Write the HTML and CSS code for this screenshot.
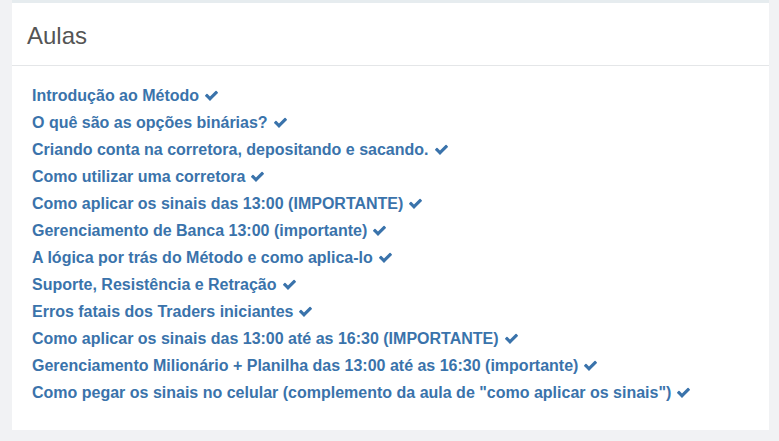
FILE: index.html
```html
<!DOCTYPE html>
<html lang="pt">
<head>
  <meta charset="UTF-8" />
  <title>Aulas</title>
  <link rel="stylesheet" href="styles.css">
</head>
<body>
  <div class="panel">
    <div class="panel-heading">
      <h3>Aulas</h3>
    </div>
    <ul class="lessons">
      <li><a href="#">Introdução ao Método</a><svg class="check" viewBox="0 0 1792 1792"><path d="M1671 566q0 40-28 68l-724 724-136 136q-28 28-68 28t-68-28l-136-136-362-362q-28-28-28-68t28-68l136-136q28-28 68-28t68 28l294 295 656-657q28-28 68-28t68 28l136 136q28 28 28 68z"/></svg></li>
      <li><a href="#">O quê são as opções binárias?</a><svg class="check" viewBox="0 0 1792 1792"><path d="M1671 566q0 40-28 68l-724 724-136 136q-28 28-68 28t-68-28l-136-136-362-362q-28-28-28-68t28-68l136-136q28-28 68-28t68 28l294 295 656-657q28-28 68-28t68 28l136 136q28 28 28 68z"/></svg></li>
      <li><a href="#">Criando conta na corretora, depositando e sacando.</a><svg class="check" viewBox="0 0 1792 1792"><path d="M1671 566q0 40-28 68l-724 724-136 136q-28 28-68 28t-68-28l-136-136-362-362q-28-28-28-68t28-68l136-136q28-28 68-28t68 28l294 295 656-657q28-28 68-28t68 28l136 136q28 28 28 68z"/></svg></li>
      <li><a href="#">Como utilizar uma corretora</a><svg class="check" viewBox="0 0 1792 1792"><path d="M1671 566q0 40-28 68l-724 724-136 136q-28 28-68 28t-68-28l-136-136-362-362q-28-28-28-68t28-68l136-136q28-28 68-28t68 28l294 295 656-657q28-28 68-28t68 28l136 136q28 28 28 68z"/></svg></li>
      <li><a href="#">Como aplicar os sinais das 13:00 (IMPORTANTE)</a><svg class="check" viewBox="0 0 1792 1792"><path d="M1671 566q0 40-28 68l-724 724-136 136q-28 28-68 28t-68-28l-136-136-362-362q-28-28-28-68t28-68l136-136q28-28 68-28t68 28l294 295 656-657q28-28 68-28t68 28l136 136q28 28 28 68z"/></svg></li>
      <li><a href="#">Gerenciamento de Banca 13:00 (importante)</a><svg class="check" viewBox="0 0 1792 1792"><path d="M1671 566q0 40-28 68l-724 724-136 136q-28 28-68 28t-68-28l-136-136-362-362q-28-28-28-68t28-68l136-136q28-28 68-28t68 28l294 295 656-657q28-28 68-28t68 28l136 136q28 28 28 68z"/></svg></li>
      <li><a href="#">A lógica por trás do Método e como aplica-lo</a><svg class="check" viewBox="0 0 1792 1792"><path d="M1671 566q0 40-28 68l-724 724-136 136q-28 28-68 28t-68-28l-136-136-362-362q-28-28-28-68t28-68l136-136q28-28 68-28t68 28l294 295 656-657q28-28 68-28t68 28l136 136q28 28 28 68z"/></svg></li>
      <li><a href="#">Suporte, Resistência e Retração</a><svg class="check" viewBox="0 0 1792 1792"><path d="M1671 566q0 40-28 68l-724 724-136 136q-28 28-68 28t-68-28l-136-136-362-362q-28-28-28-68t28-68l136-136q28-28 68-28t68 28l294 295 656-657q28-28 68-28t68 28l136 136q28 28 28 68z"/></svg></li>
      <li><a href="#">Erros fatais dos Traders iniciantes</a><svg class="check" viewBox="0 0 1792 1792"><path d="M1671 566q0 40-28 68l-724 724-136 136q-28 28-68 28t-68-28l-136-136-362-362q-28-28-28-68t28-68l136-136q28-28 68-28t68 28l294 295 656-657q28-28 68-28t68 28l136 136q28 28 28 68z"/></svg></li>
      <li><a href="#">Como aplicar os sinais das 13:00 até as 16:30 (IMPORTANTE)</a><svg class="check" viewBox="0 0 1792 1792"><path d="M1671 566q0 40-28 68l-724 724-136 136q-28 28-68 28t-68-28l-136-136-362-362q-28-28-28-68t28-68l136-136q28-28 68-28t68 28l294 295 656-657q28-28 68-28t68 28l136 136q28 28 28 68z"/></svg></li>
      <li><a href="#">Gerenciamento Milionário + Planilha das 13:00 até as 16:30 (importante)</a><svg class="check" viewBox="0 0 1792 1792"><path d="M1671 566q0 40-28 68l-724 724-136 136q-28 28-68 28t-68-28l-136-136-362-362q-28-28-28-68t28-68l136-136q28-28 68-28t68 28l294 295 656-657q28-28 68-28t68 28l136 136q28 28 28 68z"/></svg></li>
      <li><a href="#">Como pegar os sinais no celular (complemento da aula de "como aplicar os sinais")</a><svg class="check" viewBox="0 0 1792 1792"><path d="M1671 566q0 40-28 68l-724 724-136 136q-28 28-68 28t-68-28l-136-136-362-362q-28-28-28-68t28-68l136-136q28-28 68-28t68 28l294 295 656-657q28-28 68-28t68 28l136 136q28 28 28 68z"/></svg></li>
    </ul>
  </div>
</body>
</html>
```

FILE: styles.css
```css
* { box-sizing: border-box; }
body {
  margin: 0;
  background-color: #f1f2f4;
  font-family: 'Liberation Sans', Arial, sans-serif;
}
.panel {
  margin: 0 10px 0 12px;
  background-color: white;
  border-top: 3px solid #e6ecef;
  height: 430px;
}
.panel-heading {
  height: 63px;
  padding: 20px 15px 0;
  border-bottom: 1px solid #e4e6e8;
}
.panel-heading h3 {
  margin: 0;
  font-size: 24px;
  font-weight: normal;
  line-height: 26px;
  color: #555;
}
.lessons {
  list-style: none;
  margin: 0;
  padding: 16px 20px 0;
}
.lessons li {
  display: flex;
  align-items: center;
  height: 27px;
}
.lessons a {
  color: #3a73ab;
  font-size: 16px;
  font-weight: bold;
  text-decoration: none;
}
.check {
  width: 15px;
  height: 15px;
  margin-left: 5px;
  fill: #3a73ab;
}
```
